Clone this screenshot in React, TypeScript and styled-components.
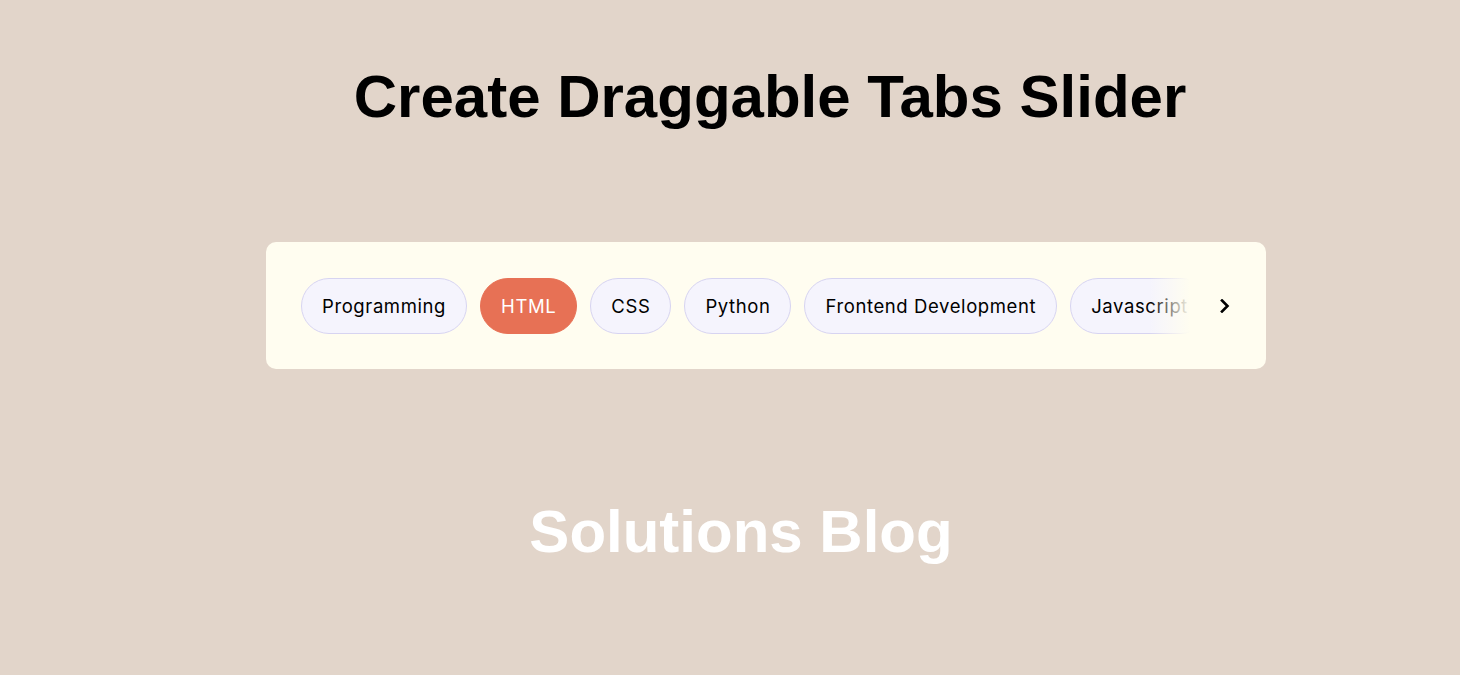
import React from "react";
import styled, { createGlobalStyle } from "styled-components";

const Global = createGlobalStyle`
  html, body { margin: 0; padding: 0; }
  body { background: #e2d5ca; font-family: "Liberation Sans", Arial, sans-serif; }
`;

const Page = styled.div`
  display: flex;
  flex-direction: column;
  align-items: flex-start;
  width: 1460px;
  height: 675px;
  overflow: hidden;
`;

const Title = styled.h1`
  margin: 64px 0 0 80px;
  width: 1380px;
  text-align: center;
  font-family: "Liberation Sans", Arial, sans-serif;
  font-weight: 700;
  font-size: 60px;
  line-height: 66px;
  color: #000;
`;

const Card = styled.div`
  margin: 112px 0 0 266px;
  width: 1000px;
  height: 127px;
  box-sizing: border-box;
  padding: 0 35px;
  background: #fffdf0;
  border-radius: 10px;
  display: flex;
  align-items: center;
  position: relative;
  overflow: hidden;
`;

const TabList = styled.ul`
  list-style: none;
  margin: 0;
  padding: 0;
  display: flex;
  gap: 13px;
  overflow: hidden;
  white-space: nowrap;
  flex: 1;
`;

const Tab = styled.li<{ $active?: boolean }>`
  flex-shrink: 0;
  height: 56px;
  box-sizing: border-box;
  padding: 0 20px;
  display: flex;
  align-items: center;
  border-radius: 30px;
  font-family: "Inter", "Noto Sans", sans-serif;
  font-size: 18.5px;
  letter-spacing: 0.6px;
  color: ${(p) => (p.$active ? "#fff" : "#000")};
  background: ${(p) => (p.$active ? "#e77155" : "#f5f4fd")};
  border: 1px solid ${(p) => (p.$active ? "#e77155" : "#d7d4f1")};
`;

const Fade = styled.div`
  position: absolute;
  top: 0;
  right: 35px;
  height: 100%;
  width: 82px;
  display: flex;
  align-items: center;
  justify-content: flex-end;
  background: linear-gradient(to left, #fffdf0 50%, rgba(255, 253, 240, 0));
`;

const Arrow = styled.div`
  width: 20px;
  height: 20px;
  margin-right: -4px;
  display: flex;
  align-items: center;
  justify-content: center;
`;

const Footer = styled.h2`
  margin: 133px 0 0 22px;
  width: 1438px;
  text-align: center;
  font-family: "Liberation Sans", Arial, sans-serif;
  font-weight: 700;
  font-size: 60px;
  line-height: 60px;
  color: #fff;
`;

const tabs = [
  "Programming",
  "HTML",
  "CSS",
  "Python",
  "Frontend Development",
  "Javascript",
  "Nodejs",
  "Reactjs",
];

export default function App() {
  return (
    <Page>
      <Global />
      <Title>Create Draggable Tabs Slider</Title>
      <Card>
        <TabList>
          {tabs.map((t) => (
            <Tab key={t} $active={t === "HTML"}>
              {t}
            </Tab>
          ))}
        </TabList>
        <Fade>
          <Arrow>
            <svg width="10" height="14" viewBox="0 0 10 14">
              <path d="M2 1.5 L7.5 7 L2 12.5" fill="none" stroke="#000" strokeWidth="2.6" strokeLinecap="square" />
            </svg>
          </Arrow>
        </Fade>
      </Card>
      <Footer>Solutions Blog</Footer>
    </Page>
  );
}
